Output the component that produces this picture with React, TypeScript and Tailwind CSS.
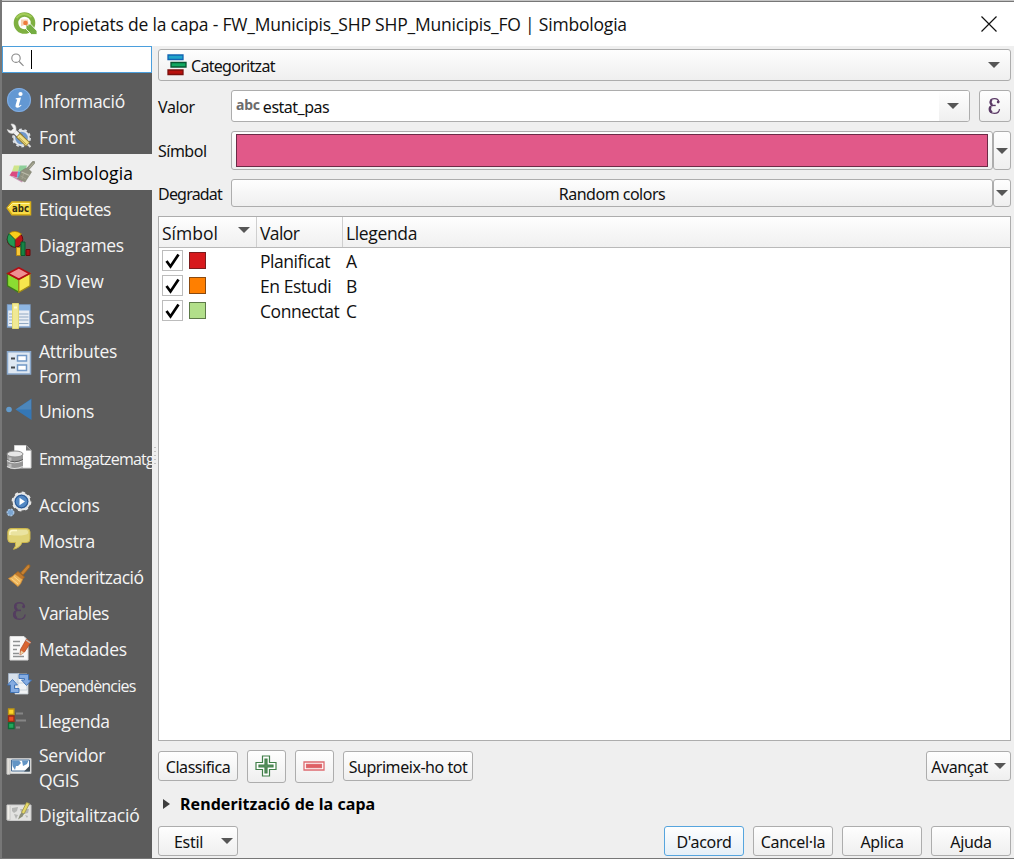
import React from "react";

type IconProps = { children: React.ReactNode; className?: string };

function Icon({ children, className = "h-[26px] w-[26px]" }: IconProps) {
  return (
    <svg viewBox="0 0 26 26" className={`block shrink-0 ${className}`} fill="none">
      {children}
    </svg>
  );
}

function Epsilon({ className = "", fill = "#5b3a66" }: { className?: string; fill?: string }) {
  return (
    <Icon className={className}>
      <path
        d="M20 7.500C19.600 4 17.400 2.300 14 2.300C10 2.300 7.400 4.500 7.400 7.500C7.400 10 8.800 11.600 11.500 12.200C8 12.800 6 14.800 6 17.500C6 21.300 9.200 23.700 13.600 23.700C17.700 23.700 20.500 21.500 21 17.500"
        stroke={fill}
        strokeWidth="1.800"
      />
      <path d="M10 12.200H15.500" stroke={fill} strokeWidth="2" />
      <path d="M9.500 4Q6.500 8.500 10.500 11M8.300 14Q5.500 18.500 10 22.200" stroke={fill} strokeWidth="3" />
      <circle cx="19" cy="7.300" r="2" fill={fill} />
    </Icon>
  );
}

const icons: Record<string, React.ReactNode> = {
  info: (
    <Icon>
      <circle cx="13" cy="13" r="12" fill="#6398d3" />
      <circle cx="13" cy="13" r="11.500" stroke="#86aee0" />
      <circle cx="14.500" cy="7" r="2.100" fill="#fff" />
      <path d="M9.800 11.200L15 10.500L12.800 18.200Q12.700 19.300 15 17.800L15.500 18.500Q12.500 21.300 10.500 20.600Q9 20 9.600 18L11.200 12.500L9.600 12.200Z" fill="#fff" />
    </Icon>
  ),
  tools: (
    <Icon>
      <circle cx="15.500" cy="15" r="7.300" fill="#7099cc" stroke="#dfe3e8" strokeWidth="2" />
      <circle cx="15.500" cy="15" r="8.600" stroke="#dfe3e8" strokeWidth="1.600" strokeDasharray="2.700 2.704" />
      <path d="M8 8L15 14.500" stroke="#5c5c5c" strokeWidth="6" />
      <path d="M7 7L15 14.500" stroke="#f1f1f1" strokeWidth="4" />
      <path d="M5 1Q9.500 .5 10 5Q10.500 9.500 6.500 10.500Q2 10.500 1.300 6.500L5 8L7.500 5.500Z" fill="#f4f4f4" stroke="#d4d4d4" strokeWidth=".6" />
      <path d="M12 12L22 21.500" stroke="#8f7b34" strokeWidth="6" />
      <path d="M12.500 12.500L21.500 21" stroke="#f1df83" strokeWidth="4.200" />
      <path d="M13 14.500L20.500 21.500" stroke="#b7a147" />
      <path d="M22 21.500L24.500 24" stroke="#ddd" strokeWidth="2" />
    </Icon>
  ),
  style: (
    <Icon className="mt-px h-[26px] w-[26px]">
      <path d="M5 5.500H10.500L9 11.500H3Z" fill="#cfe58a" />
      <path d="M10.500 5.500H18L16 11.500H9Z" fill="#8fcf9a" />
      <path d="M3 11.500H9L8 17.500L.5 15.500Z" fill="#dc4a80" />
      <path d="M9 11.500H15L13 18L8 17.500Z" fill="#55aedb" />
      <path d="M.5 15.500L8 17.500L14 20.500L13 22.500Z" fill="#c795b4" />
      <path d="M23.500 1.500Q26.500 .5 25.500 3.500L20 9.500L22.500 12L16 22L8.500 18.500Q12 15 11.500 11.500L15.500 9L18 8Z" fill="#90917f" stroke="#7d7f6f" strokeWidth=".6" />
      <path d="M12.500 12L20.500 15.500" stroke="#bcbcab" strokeWidth="1.300" />
      <path d="M11.500 16L17 19M14.500 14L13 19" stroke="#a6a696" strokeWidth=".8" />
      <path d="M20 8.200L24.500 3" stroke="#b3b39c" />
    </Icon>
  ),
  label: (
    <Icon>
      <path d="M1.200 13L6 7H24.500V19.700H6Z" fill="#f8dc46" stroke="#d7ae18" strokeWidth="1.500" />
      <path d="M2.200 13L6.500 8.500H23.500" stroke="#fff6a3" />
      <text x="6" y="16.500" fontSize="10" fontWeight="700" fontFamily="DejaVu Sans" textLength="17" lengthAdjust="spacingAndGlyphs" fill="#302b13">abc</text>
    </Icon>
  ),
  diagram: (
    <Icon>
      <circle cx="9" cy="8.500" r="7.800" fill="#bb1518" stroke="#640b0d" />
      <path d="M9 8.500L3 2.500Q9-2 15.500 3Z" fill="#f9cd1b" stroke="#aa850a" strokeWidth=".7" />
      <path d="M9 8.500L3 2.500Q-1 9 4 14L9 16.500Z" fill="#239b54" stroke="#09582e" strokeWidth=".7" />
      <path d="M10.500 16.500H14.500V24.500H10.500Z" fill="#f7c83b" stroke="#b88912" />
      <path d="M15 11H19V24.500H15Z" fill="#168344" stroke="#075b2e" />
      <path d="M20 18.500H24V24.500H20Z" fill="#a61115" stroke="#68090b" />
    </Icon>
  ),
  cube: (
    <Icon>
      <path d="M1.500 6.500L12.800 12.500V25.300L1.500 18.800Z" fill="#8bdc32" stroke="#3e7d18" strokeWidth="1.300" />
      <path d="M12.800 12.500L24 6.500V18.800L12.800 25.300Z" fill="#f7e64d" stroke="#a18a17" strokeWidth="1.300" />
      <path d="M2 6.500L12.800 .8L23.500 6.500L12.800 12.300Z" fill="#f08f92" stroke="#b50d13" strokeWidth="1.700" />
    </Icon>
  ),
  fields: (
    <Icon>
      <path d="M1.500 2H24V24H1.500Z" fill="#e9eef5" stroke="#7da0ca" strokeWidth="1.300" />
      <path d="M2 2.500H24V7.500H2Z" fill="#8db6e3" />
      <path d="M3 11H22.500M3 14H22.500M3 17H22.500M3 20.500H22.500" stroke="#90a8c3" strokeWidth="1.200" />
      <path d="M6.500 .5H12.500V25.500H6.500Z" fill="#f0e995" stroke="#e2d973" />
      <path d="M8 4.500H11" stroke="#fffbd0" strokeWidth="2" />
    </Icon>
  ),
  form: (
    <Icon>
      <path d="M1.500 1.800H24.500V24H1.500Z" fill="#dfe8f2" stroke="#8aa8cb" strokeWidth="1.500" />
      <path d="M5 8.500H9M5 17.500H9" stroke="#44484d" strokeWidth="2" />
      <path d="M11.500 5.500H20.500V11H11.500ZM11.500 15H20.500V20.500H11.500Z" fill="#fff" stroke="#7298c6" strokeWidth="1.500" />
    </Icon>
  ),
  join: (
    <Icon>
      <circle cx="3" cy="12.500" r="2.800" fill="#639bcc" />
      <path d="M9.500 12.500L25.500 1.500V23Z" fill="#3577b5" />
      <path d="M9.500 12.500L25 2.500V12.500Z" fill="#699ac4" fillOpacity=".45" />
    </Icon>
  ),
  storage: (
    <Icon>
      <path d="M8.500 1.500H20L25 6.500V24H8.500Z" fill="#fff" stroke="#d0d0d0" />
      <path d="M20 1.500V6.500H25Z" fill="#777" />
      <path d="M1 10V22.500Q7 27.500 17 23.500V10Z" fill="#969696" />
      <ellipse cx="9" cy="10" rx="8" ry="3" fill="#e7e7e7" stroke="#8f8f8f" />
      <path d="M1 16.500Q8 21 17 16.500M1 22.500Q8 26.500 17 22.500" stroke="#ddd" strokeWidth="1.200" />
      <path d="M1.500 15.500Q8 20 17 15.500" stroke="#5b5b5b" />
      <path d="M4 13.500V17M4 20V23" stroke="#e4e4e4" strokeWidth="3" strokeOpacity=".5" />
    </Icon>
  ),
  action: (
    <Icon>
      <circle cx="15.500" cy="10.500" r="8" fill="#3f75b6" stroke="#e6e6e6" strokeWidth="2" />
      <circle cx="15.500" cy="10.500" r="9" stroke="#e6e6e6" strokeWidth="1.800" strokeDasharray="3.300 3.768" />
      <circle cx="15.500" cy="10.500" r="6.200" fill="#5288c4" stroke="#2b568e" />
      <path d="M13.500 6.800V14.200L19 10.500Z" fill="#fff" />
      <circle cx="4.500" cy="21.500" r="3.200" fill="#7aa4d0" stroke="#a5c2e0" strokeWidth="1.500" strokeDasharray="2 1" />
    </Icon>
  ),
  tip: (
    <Icon>
      <path d="M5 1.500H20.500Q24 1.500 24 5V12Q24 15.500 20.500 15.500H16Q14.500 20.500 7.500 22.300Q10.500 19 9.500 15.500H5Q1.800 15.500 1.800 12V5Q1.800 1.500 5 1.500Z" fill="#e0d377" stroke="#ccb64c" />
      <path d="M5 3H20Q22.500 3 22 6.500Q18 9.500 3.500 8Q2.500 3.500 5 3Z" fill="#eae3a0" />
      <path d="M4 8Q3 3.500 7 3.500H11" stroke="#fff9cb" strokeWidth="1.300" />
    </Icon>
  ),
  brush: (
    <Icon>
      <path d="M14.500 10L21.500 2Q25 1 23.500 4.500L17 12Z" fill="#c88232" stroke="#9b611d" strokeWidth=".8" />
      <path d="M12 8.500L18.500 14L16.500 16.500L9 11Z" fill="#c37a2c" stroke="#a46420" strokeWidth=".8" />
      <path d="M9 11L16.500 16.500Q15 21 12 23.500L2.500 15.500Q6.500 14 9 11Z" fill="#efb65b" stroke="#d08c35" strokeWidth=".8" />
      <path d="M5.500 15.500L12 21M8 13.500L14 18.500" stroke="#fbd78c" />
    </Icon>
  ),
  variables: <Epsilon className="mb-[3px] h-[20px] w-[26px]" fill="#543d60" />,
  metadata: (
    <Icon>
      <path d="M4 1.500H18L22 5.500V25H4Z" fill="#f8f8f8" stroke="#ddd" />
      <path d="M7 6.500H14M7 10.500H14M7 14.500H11M7 18.500H13M7 21.500H18" stroke="#8e9192" strokeWidth="1.300" />
      <path d="M20.500 4L25 7L18.500 17L14 20L14.500 14.500Z" fill="#d96532" stroke="#a94220" strokeWidth=".7" />
      <path d="M15 15.500L18 17.500L14 20Z" fill="#ecd4a7" />
      <path d="M20 5L24.500 8" stroke="#bfc1c3" strokeWidth="1.500" />
    </Icon>
  ),
  dependencies: (
    <Icon>
      <path d="M2.500 2.500H13V13H2.500Z" fill="#d7e1ec" stroke="#a8b8ca" strokeWidth=".8" />
      <path d="M12 3H21V19H12ZM9 12H22V23H9Z" fill="#f1f3f5" stroke="#c3cad2" strokeWidth=".8" />
      <path d="M13 3.500H22.500V9H25.500L20.500 14.500L15.500 9H18.500V7.500H13Z" fill="#85ace2" stroke="#3b70b6" strokeWidth=".9" />
      <path d="M1.500 14L6.500 8.500L11.500 14H8.500V17.500H13V21.500H4.500V14Z" fill="#85ace2" stroke="#3b70b6" strokeWidth=".9" />
    </Icon>
  ),
  legend: (
    <Icon>
      <path d="M2.500 2H8V7.500H2.500Z" fill="#ffd52a" stroke="#bd9514" strokeWidth="1.300" />
      <path d="M2.500 9H8V14.500H2.500Z" fill="#ed4c22" stroke="#992a14" strokeWidth="1.300" />
      <path d="M2.500 16H8V21.500H2.500Z" fill="#22a65a" stroke="#0c6b35" strokeWidth="1.300" />
      <path d="M10 6.500H17M10 13.500H20M10 20.500H14" stroke="#858585" strokeWidth="2" />
    </Icon>
  ),
  server: (
    <Icon>
      <path d="M1 4.500H25V19.500H4L1 20Z" fill="#e5e6e5" stroke="#c4c4c4" />
      <path d="M5.500 6H23.500V17H5.500Z" fill="#fff" stroke="#4b7098" />
      <path d="M6 6.500H13L15 9L12 12H10L9 16L6.500 12ZM16 6.500H22.500L21 10L17 12Z" fill="#6395c5" />
      <path d="M18 17.500L24 11.500V17.500Z" fill="#404e59" />
      <path d="M1 4V20.500H4V5.500" fill="#e2dfda" stroke="#aaa" strokeWidth=".5" />
    </Icon>
  ),
  digitize: (
    <Icon>
      <path d="M1 4H25V19.500H4L1 19Z" fill="#e2e2e0" stroke="#cacaca" />
      <path d="M6 7L12 6L11 10L8 12L6 10ZM14 8H23L22 12L18 13L15 11ZM8 13L12 14L10 18ZM19 14L22 15L21 17Z" fill="#b5b6b4" />
      <path d="M20.500 1.500L23.500 2.500L18 13L15.500 11.500Z" fill="#e6d967" stroke="#9c934b" strokeWidth=".8" />
      <path d="M15.500 11.500L18 13L16.500 15.500L12 18.500L14 13.500Z" fill="#8a8d78" />
      <path d="M1 4V19H4V5" fill="#f0eee9" stroke="#aaa" strokeWidth=".5" />
    </Icon>
  ),
};

const nav = [
  { icon: "info", text: "Informació", row: "h-9", font: "text-[17.500px] tracking-[-0.25px]" },
  { icon: "tools", text: "Font", row: "h-9", font: "text-[17.500px]" },
  { icon: "style", text: "Simbologia", row: "h-9", font: "text-[17.500px] tracking-[0.1px]", active: true },
  { icon: "label", text: "Etiquetes", row: "h-9", font: "text-[17.500px] tracking-[-0.45px]" },
  { icon: "diagram", text: "Diagrames", row: "h-9", font: "text-[17.500px] tracking-[-0.3px]" },
  { icon: "cube", text: "3D View", row: "h-9", font: "text-[17.500px] tracking-[-0.1px]" },
  { icon: "fields", text: "Camps", row: "h-9", font: "text-[17.500px] tracking-[-0.15px]" },
  { icon: "form", text: "Attributes Form", row: "h-[58px]", font: "text-[17.500px] tracking-[-0.3px]" },
  { icon: "join", text: "Unions", row: "h-9", font: "text-[17.500px] tracking-[-0.45px]" },
  { icon: "storage", text: "Emmagatzematge", row: "h-[58px]", font: "relative top-px text-[16px] tracking-[-0.8px]" },
  { icon: "action", text: "Accions", row: "h-9", font: "text-[17.500px] tracking-[-0.15px]" },
  { icon: "tip", text: "Mostra", row: "h-9", font: "text-[17.500px] tracking-[-0.3px]" },
  { icon: "brush", text: "Renderització", row: "h-9", font: "text-[17.500px] tracking-[-0.5px]" },
  { icon: "variables", text: "Variables", row: "h-9", font: "text-[17.500px] tracking-[-0.55px]" },
  { icon: "metadata", text: "Metadades", row: "h-9", font: "text-[17.500px] tracking-[-0.35px]" },
  { icon: "dependencies", text: "Dependències", row: "h-9", font: "relative top-px text-[16px] tracking-[-0.8px]" },
  { icon: "legend", text: "Llegenda", row: "h-9", font: "text-[17.500px] tracking-[-0.4px]" },
  { icon: "server", text: "Servidor QGIS", row: "h-[58px]", font: "text-[17.500px] tracking-[-0.25px]" },
  { icon: "digitize", text: "Digitalització", row: "h-9", font: "text-[17.500px] tracking-[-0.2px]" },
];

const categories = [
  { color: "bg-[#d7191c] border-[#7a1c1d]", value: "Planificat", legend: "A" },
  { color: "bg-[#ff7f00] border-[#8a4a10]", value: "En Estudi", legend: "B" },
  { color: "bg-[#b2df8a] border-[#5d7a48]", value: "Connectat", legend: "C" },
];

const raised = "rounded-[3px] border border-[#adadad] bg-linear-to-b from-[#fefefe] to-[#efefef]";

function Arrow() {
  return (
    <svg viewBox="0 0 12 6" className="block h-[6px] w-3 shrink-0">
      <path d="M0 0H12L6 6Z" fill="#565656" />
    </svg>
  );
}

function Button({ children, className }: { children: React.ReactNode; className: string }) {
  return (
    <button className={`flex shrink-0 items-center justify-center whitespace-nowrap ${className}`}>
      {children}
    </button>
  );
}

function Sidebar() {
  return (
    <aside className="flex w-[150px] shrink-0 flex-col bg-[#5c5c5c]">
      <div className="flex h-[27px] shrink-0 items-center border border-[#4b9fdd] bg-white pl-2">
        <svg viewBox="0 0 14 14" className="h-[14px] w-[14px]" fill="none" stroke="#888" strokeWidth="1.100">
          <circle cx="5" cy="5.200" r="4.200" />
          <path d="M8.200 8.500L12.500 12.800" />
        </svg>
        <span className="ml-[6px] h-[19px] w-px bg-black" />
      </div>
      <nav className="mt-[9px] flex flex-col overflow-hidden">
        {nav.map((item) => (
          <div
            key={item.text}
            className={`flex shrink-0 items-center ${item.row} ${item.active ? "bg-[#efefef] pl-[7px] text-black" : "pl-1 text-[#f4f4f4]"}`}
          >
            {icons[item.icon]}
            <span
              className={`ml-[7px] font-['Open_Sans','Noto_Sans',sans-serif] leading-[25px] ${item.font} ${item.row === "h-[58px]" && item.icon !== "storage" ? "w-[90px] pt-px" : "pt-[3px] whitespace-nowrap"}`}
            >
              {item.text}
            </span>
          </div>
        ))}
      </nav>
    </aside>
  );
}

function FormRows() {
  return (
    <>
      <div className={`flex h-8 shrink-0 items-center pr-[10px] pl-2 ${raised}`}>
        <svg viewBox="0 0 21 22" className="h-[22px] w-[21px]">
          <path d="M1 1H16V5.500H1Z" fill="#20a5ca" stroke="#1264b3" strokeWidth="1.300" />
          <path d="M4 8.500H19V13H4Z" fill="#11a860" stroke="#075632" strokeWidth="1.300" />
          <path d="M1 16H16V20.500H1Z" fill="#b9110d" stroke="#79100d" strokeWidth="1.300" />
        </svg>
        <span className="ml-[3px] pt-[2px] tracking-[-0.7px]">Categoritzat</span>
        <span className="ml-auto"><Arrow /></span>
      </div>
      <div className="mt-[9px] flex h-8 shrink-0">
        <span className="w-[73px] pt-[5px] tracking-[-0.4px]">Valor</span>
        <div className="flex w-[739px] overflow-hidden rounded-[3px] border border-[#adadad] bg-white">
          <span className="ml-1 pt-[4px] text-[14px] leading-5 font-bold tracking-[-0.2px] text-[#6c6c6c]">abc</span>
          <span className="ml-[3px] pt-[4px] tracking-[-0.5px]">estat_pas</span>
          <div className="ml-auto flex w-[30px] items-center justify-center bg-linear-to-b from-[#fefefe] to-[#efefef] pr-[2px]"><Arrow /></div>
        </div>
        <Button className={`ml-[9px] h-8 w-8 ${raised}`}><Epsilon className="mr-[2px] h-[18px] w-[22px]" /></Button>
      </div>
      <div className="mt-[9px] flex h-[39px] shrink-0">
        <span className="w-[73px] pt-[8px] tracking-[-0.5px]">Símbol</span>
        <div className={`flex w-[762px] pt-[2px] pr-1 pb-[2px] pl-1 ${raised}`}>
          <div className="w-full border border-[#6b2b46] bg-[#e15989]" />
        </div>
        <Button className={`h-[39px] w-[18px] ${raised}`}><Arrow /></Button>
      </div>
      <div className="mt-[9px] flex h-7 shrink-0">
        <span className="w-[73px] pt-[3px] tracking-[-0.8px]">Degradat</span>
        <Button className={`h-7 w-[762px] pt-[2px] tracking-[-0.5px] ${raised}`}>Random colors</Button>
        <Button className={`h-7 w-[18px] ${raised}`}><Arrow /></Button>
      </div>
    </>
  );
}

function CategoryTable() {
  return (
    <div className="mt-[9px] flex h-[525px] shrink-0 flex-col border border-[#adadad] bg-white font-['Open_Sans','Noto_Sans',sans-serif] text-[17.500px] leading-6">
      <div className="flex h-[31px] shrink-0 border-b border-[#b9b9b9] bg-linear-to-b from-[#fefefe] to-[#f0f0f0]">
        <div className="flex w-[98px] justify-between border-r border-[#cfcfcf] pt-[4px] pr-[6px] pl-[3px]">
          Símbol
          <span className="mt-[6px]"><Arrow /></span>
        </div>
        <div className="w-[86px] border-r border-[#cfcfcf] pt-[4px] pl-[3px] tracking-[-0.6px]">Valor</div>
        <div className="pt-[4px] pl-[3px] tracking-[-0.35px]">Llegenda</div>
      </div>
      <div className="flex flex-col">
        {categories.map((c) => (
          <div key={c.value} className="flex h-[25px] items-center">
            <div className="ml-[3px] flex h-[21px] w-[21px] items-center justify-center border border-[#bcbcbc] bg-white">
              <svg viewBox="0 0 15 16" className="h-4 w-[15px]" fill="none" stroke="#000" strokeWidth="2.700">
                <path d="M1.500 8L5.500 13.500L13.500 1.500" />
              </svg>
            </div>
            <div className={`ml-[6px] h-[17px] w-[17px] border ${c.color}`} />
            <span className="ml-[54px] w-[86px] tracking-[-0.45px] whitespace-nowrap">{c.value}</span>
            <span>{c.legend}</span>
          </div>
        ))}
      </div>
    </div>
  );
}

export default function App() {
  return (
    <div className="flex h-[859px] w-[1014px] flex-col overflow-hidden border-b border-l-2 border-[#777] bg-[#efefef] font-['Noto_Sans','Open_Sans',sans-serif] text-[16px] leading-6 text-[#111]">
      <div className="h-px shrink-0 bg-[#c5c5c5]" />
      <header className="flex h-[45px] shrink-0 items-center border-t border-[#777] bg-white pr-[17px] pl-[11px]">
        <svg viewBox="0 0 25 25" className="h-[25px] w-[25px]" fill="none">
          <circle cx="11.500" cy="11" r="8.500" stroke="#7fb041" strokeWidth="4.600" />
          <path d="M3.500 6Q10-1.500 18.500 5" stroke="#a3cc58" strokeWidth="2" />
          <path d="M13 12.500L17.500 12L24 19V22.500H18.500L13 17Z" fill="#75ad42" stroke="#fff" strokeWidth=".8" />
          <path d="M8 7.500H15L15.500 14.500L12.500 12.500L8 14.500Z" fill="#f5d3b4" />
          <circle cx="12.500" cy="11" r="2.300" fill="#ee7a3c" />
        </svg>
        <h1 className="ml-1 font-['Open_Sans','Noto_Sans',sans-serif] text-[17.500px] tracking-[-0.2px] whitespace-nowrap">
          Propietats de la capa - FW_Municipis_SHP SHP_Municipis_FO | Simbologia
        </h1>
        <svg viewBox="0 0 16 16" className="ml-auto h-4 w-4" fill="none" stroke="#111" strokeWidth="1.200">
          <path d="M.5.5L15.500 15.500M15.500.5L.5 15.500" />
        </svg>
      </header>
      <div className="flex min-h-0 grow">
        <Sidebar />
        <div className="flex w-[6px] shrink-0 items-center pl-[2px]">
          <div className="flex flex-col gap-[3px] pt-[7px]">
            {[0, 1, 2, 3, 4].map((n) => <span key={n} className="h-px w-[2px] bg-[#c2c2c2]" />)}
          </div>
        </div>
        <main className="flex w-[853px] shrink-0 flex-col pt-[3px]">
          <FormRows />
          <CategoryTable />
          <div className="mt-[9px] flex h-[33px] shrink-0 items-center tracking-[-0.45px]">
            <Button className={`mb-px h-[30px] w-20 pt-px ${raised}`}>Classifica</Button>
            <Button className={`ml-[9px] h-[33px] w-[39px] ${raised}`}>
              <svg viewBox="0 0 22 22" className="mr-[2px] mb-px h-[22px] w-[22px]" fill="#fff" stroke="#417f49" strokeWidth="1.200">
                <path d="M7.500 1H14.500V7.500H21V14.500H14.500V21H7.500V14.500H1V7.500H7.500Z" />
                <path d="M10 4H12V10H18V12H12V18H10V12H4V10H10Z" fill="#609766" />
              </svg>
            </Button>
            <Button className={`ml-[9px] h-[33px] w-[39px] ${raised}`}>
              <svg viewBox="0 0 22 10" className="mr-px mb-px h-[10px] w-[22px]" fill="#fff" stroke="#dd6b70" strokeWidth="1.300">
                <path d="M1 1H21V9H1Z" />
                <path d="M3.500 3.500H18.500V6.500H3.500Z" fill="#e15b60" />
              </svg>
            </Button>
            <Button className={`mb-px ml-[9px] h-[30px] w-[130px] pt-px ${raised}`}>Suprimeix-ho tot</Button>
            <Button className={`mb-px ml-auto h-[30px] w-[85px] gap-[6px] ${raised}`}><span className="pt-px">Avançat</span><Arrow /></Button>
          </div>
          <div className="mt-[9px] flex h-6 shrink-0 items-center pl-[5px] font-bold">
            <svg viewBox="0 0 7 10" className="h-[10px] w-[7px]"><path d="M0 0L7 5L0 10Z" fill="#3d3d3d" /></svg>
            <span className="ml-[10px] text-[16px] tracking-[0.07px] text-black">Renderització de la capa</span>
          </div>
          <div className="mt-[10px] flex h-[30px] shrink-0 tracking-[-0.3px]">
            <Button className={`h-[30px] w-20 justify-between! pr-1 pl-[15px] ${raised}`}><span className="pt-[2px]">Estil</span><Arrow /></Button>
            <div className="ml-auto flex gap-[9px]">
              <Button className="h-[30px] w-20 rounded-[3px] border border-[#56a5de] bg-linear-to-b from-[#fefefe] to-[#e5eff7] pt-[2px]">D'acord</Button>
              <Button className={`h-[30px] w-20 pt-[2px] ${raised}`}>Cancel·la</Button>
              <Button className={`h-[30px] w-20 pt-[2px] ${raised}`}>Aplica</Button>
              <Button className={`h-[30px] w-20 pt-[2px] ${raised}`}>Ajuda</Button>
            </div>
          </div>
        </main>
      </div>
    </div>
  );
}
